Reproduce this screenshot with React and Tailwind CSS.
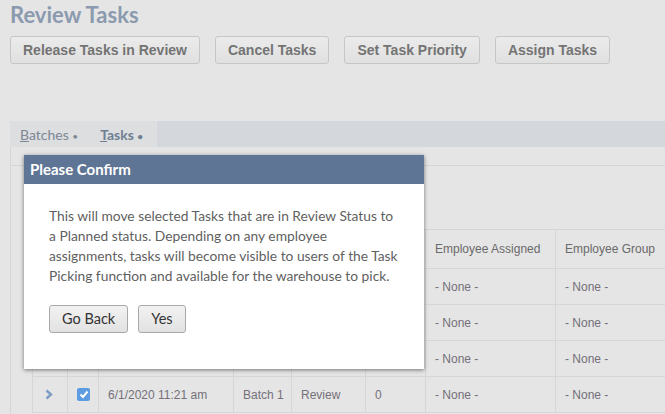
import React from 'react';

const actions = ["Release Tasks in Review", "Cancel Tasks", "Set Task Priority", "Assign Tasks"];

const rows = [
  { hidden: true },
  { hidden: true },
  { hidden: true },
  { date: "6/1/2020 11:21 am", batch: "Batch 1", status: "Review", qty: "0" },
];

const cols = "grid grid-cols-[35px_31px_135px_58px_74px_60px_130px_130px]";
const cell = "border-r border-[#d6d6d6] flex items-center pl-[9px] whitespace-nowrap overflow-hidden";

function Chevron() {
  return (
    <svg width="8" height="11" viewBox="0 0 8 11">
      <path d="M1.5 1.5 L6 5.5 L1.5 9.5" fill="none" stroke="#7c9cc6" strokeWidth="2.4" />
    </svg>
  );
}

function Check() {
  return (
    <div className="w-[13px] h-[13px] rounded-[2px] bg-[#5d9ce0] flex items-center justify-center">
      <svg width="10" height="9" viewBox="0 0 10 9">
        <path d="M1.5 4.5 L4 7 L8.5 1.5" fill="none" stroke="#fff" strokeWidth="2" />
      </svg>
    </div>
  );
}

function ConfirmDialog() {
  return (
    <div className="absolute left-[24px] top-[155px] w-[400px] bg-white shadow-[0_1px_4px_rgba(0,0,0,0.5)] font-['Lato',sans-serif]">
      <div className="h-[29px] bg-[#5f7595] text-white font-bold text-[15px] flex items-center px-[6px]">
        Please Confirm
      </div>
      <div className="pt-[22px] pb-[36px] px-[25px]">
        <p className="text-[13.8px] leading-[20px] text-[#5f5f5f] w-[350px]">
          This will move selected Tasks that are in Review Status to a Planned status. Depending on any employee assignments, tasks will become visible to users of the Task Picking function and available for the warehouse to pick.
        </p>
        <div className="flex gap-[10px] mt-[19px]">
          <button className="h-[28px] px-[12px] border border-[#a9a9a9] rounded-[3px] bg-gradient-to-b from-[#f2f2f2] to-[#e2e2e2] text-[14.5px] text-[#333]">Go Back</button>
          <button className="h-[28px] px-[12px] border border-[#a9a9a9] rounded-[3px] bg-gradient-to-b from-[#f2f2f2] to-[#e2e2e2] text-[14.5px] text-[#333]">Yes</button>
        </div>
      </div>
    </div>
  );
}

export default function App() {
  return (
    <div className="relative w-[665px] h-[414px] overflow-hidden bg-[#e5e5e5] font-['Liberation_Sans',Arial,sans-serif]">
      <div className="pl-[10px]">
        <h1 className="font-['Lato',sans-serif] font-bold text-[22px] leading-[28px] pt-[1px] text-[#8b9aae]">Review Tasks</h1>
        <div className="flex gap-[15px] mt-[7px]">
          {actions.map((a) => (
            <button
              key={a}
              className="h-[28px] px-[12px] border border-[#c6c6c6] rounded-[3px] bg-gradient-to-b from-[#ebebeb] to-[#e0e0e0] font-bold text-[14px] text-[#747474]"
            >
              {a}
            </button>
          ))}
        </div>

        <div className="mt-[57px] flex h-[26px] bg-[#d4d8dc] font-['Lato',sans-serif] text-[14px]">
          <div className="flex items-center w-[147px] bg-[#dcdee0] pl-[10px] gap-[22px]">
            <span className="text-[#7d8794]"><span className="underline">B</span>atches <span className="text-[10px] align-middle">•</span></span>
            <span className="relative font-bold text-[#6f7e92]">
              <span className="underline">T</span>asks <span className="text-[10px] align-middle">•</span>
              <span className="absolute left-[18px] top-[23px] w-0 h-0 border-x-[7px] border-x-transparent border-b-[5px] border-b-[#e5e5e5]" />
            </span>
          </div>
        </div>

        <div className="border-l border-[#d6d6d6] h-[300px]">
          <div className="h-[19px] border-b border-[#d6d6d6]" />
          <div className="pl-[21px] pt-[63px]">
            <div className={`${cols} h-[40px] border-t border-b border-l border-[#d6d6d6] text-[12px] text-[#6a6a6a]`}>
              <div className={cell} />
              <div className={cell} />
              <div className={cell} />
              <div className={cell} />
              <div className={cell} />
              <div className={cell} />
              <div className={cell}>Employee Assigned</div>
              <div className={cell}>Employee Group</div>
            </div>
            {rows.map((r, i) => (
              <div key={i} className={`${cols} h-[36px] border-b border-l border-[#d6d6d6] text-[12px] text-[#74707a]`}>
                <div className={`${cell} pl-[12px]`}>{!r.hidden && <Chevron />}</div>
                <div className={`${cell} pl-[9px]`}>{!r.hidden && <Check />}</div>
                <div className={cell}>{r.date}</div>
                <div className={cell}>{r.batch}</div>
                <div className={cell}>{r.status}</div>
                <div className={cell}>{r.qty}</div>
                <div className={cell}>- None -</div>
                <div className={cell}>- None -</div>
              </div>
            ))}
          </div>
        </div>
      </div>

      <ConfirmDialog />
    </div>
  );
}
